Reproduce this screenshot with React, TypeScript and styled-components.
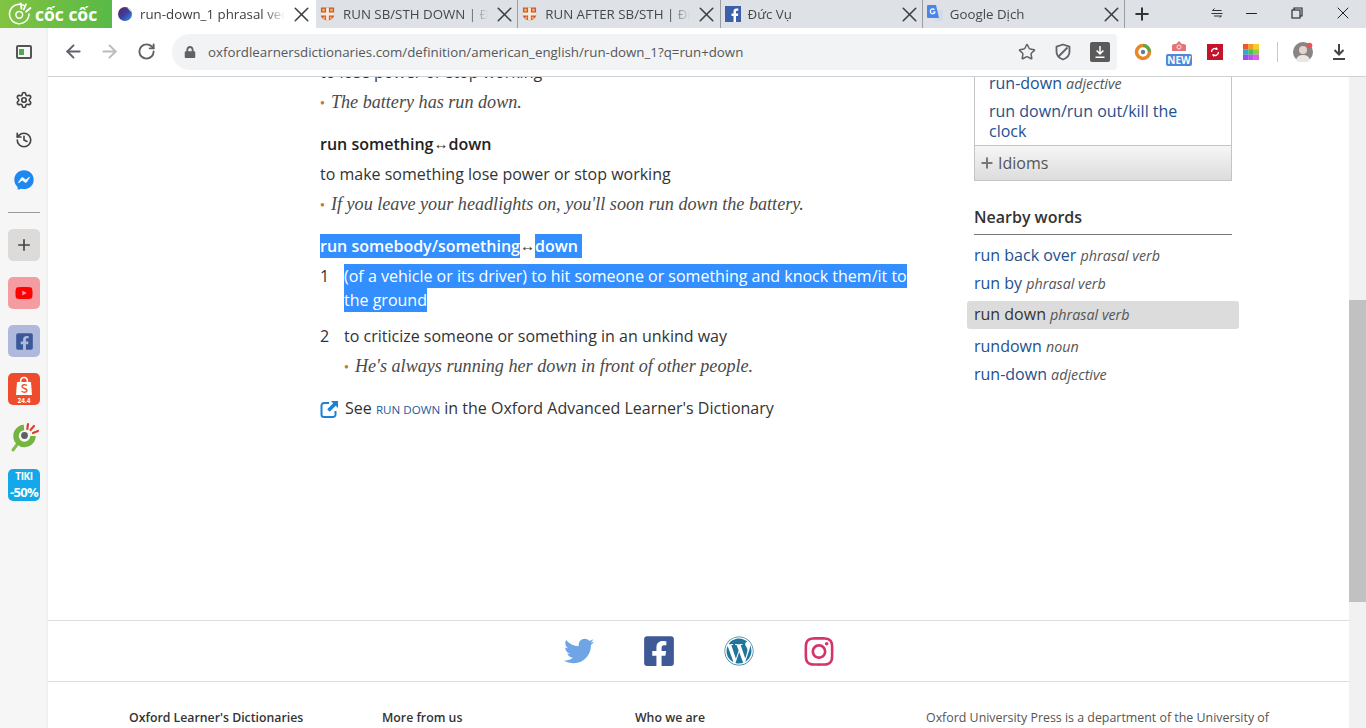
import React, { FC } from 'react';
import styled, { createGlobalStyle } from 'styled-components';
import { ArrowLeft, ArrowRight, RotateCw, Star, X, Plus, Minus, Settings, History } from 'lucide-react';
import { FaTwitter, FaFacebookSquare, FaWordpress, FaInstagram, FaFacebookMessenger, FaLock, FaYoutube } from 'react-icons/fa';

const GlobalStyle = createGlobalStyle`
  html, body { margin: 0; padding: 0; height: 728px; overflow: hidden; background: #fff; }
  * { box-sizing: border-box; }
  body { font-family: "Open Sans", "Liberation Sans", sans-serif; color: #333; }
`;

const tabs = [
  { title: 'run-down_1 phrasal verb', icon: 'orb', active: true },
  { title: 'RUN SB/STH DOWN | Định nghĩa', icon: 'shield' },
  { title: 'RUN AFTER SB/STH | Định nghĩa', icon: 'shield' },
  { title: 'Đức Vụ', icon: 'fb' },
  { title: 'Google Dịch', icon: 'gt' },
];

const Favicon: FC<{ kind: string }> = ({ kind }) => {
  if (kind === 'orb') {
    return (
      <svg width="16" height="16" viewBox="0 0 16 16">
        <defs>
          <linearGradient id="orb" x1="0" y1="0" x2="1" y2="1">
            <stop offset="0" stopColor="#6b1d5e" />
            <stop offset="0.5" stopColor="#3b3f9e" />
            <stop offset="1" stopColor="#2f9be0" />
          </linearGradient>
        </defs>
        <circle cx="8" cy="8" r="7" fill="url(#orb)" />
        <path d="M10 1.400A7 7 0 0 1 14.800 6.500C13 4.500 11.500 3 10 1.400z" fill="#f4f4f4" />
      </svg>
    );
  }
  if (kind === 'shield') {
    return (
      <svg width="15" height="16" viewBox="0 0 16 16">
        <path d="M1 1h14v8c0 3-3 5-7 6-4-1-7-3-7-6z" fill="#d2552d" />
        <path d="M6.500 1h3v14h-3zM1 6.500h14v3H1z" fill="#f5e9da" />
        <path d="M2.500 2.500h2.500v2.500H2.500zM11 2.500h2.500v2.500H11zM3.500 11h2v2h-2zM10.500 11h2v2h-2z" fill="#f0c068" />
      </svg>
    );
  }
  if (kind === 'fb') {
    return (
      <svg width="16" height="16" viewBox="0 0 16 16">
        <rect width="16" height="16" fill="#3b5fa8" />
        <path d="M11 16v-6h2l.3-2.500H11V6c0-.8.300-1.200 1.200-1.200h1.100V2.600c-.5-.1-1.200-.1-1.800-.1-1.900 0-3 1.100-3 3.100v1.900H6.500V10h2v6z" fill="#fff" />
      </svg>
    );
  }
  return (
    <svg width="16" height="18" viewBox="0 0 16 18">
      <path d="M9 5h6a1 1 0 0 1 1 1v9a1 1 0 0 1-1 1H8z" fill="#d5dbe6" />
      <path d="M1 0h8l3 13H1a1 1 0 0 1-1-1V1a1 1 0 0 1 1-1z" fill="#4a86e8" />
      <path d="M7.500 4.800A2.400 2.400 0 1 0 8 7H5.800" fill="none" stroke="#fff" strokeWidth="1.200" />
    </svg>
  );
};

const CocCocMark: FC<{ size: number }> = ({ size }) => (
  <svg width={size} height={size} viewBox="0 0 32 32">
    <path d="M22 5A13 13 0 1 0 28 16" fill="none" stroke="#fff" strokeWidth="2" strokeLinecap="round" />
    <circle cx="15" cy="17" r="4.500" fill="none" stroke="#fff" strokeWidth="2" />
    <path d="M17 2l1 7M24 3l-3 7M30 8l-6 5" stroke="#fff" strokeWidth="2.400" strokeLinecap="round" />
  </svg>
);

const ShieldIcon = () => (
  <svg width="18" height="18" viewBox="0 0 18 18" fill="none" stroke="#5f6368" strokeWidth="1.800">
    <path d="M9 1.500l6.500 2.200v5c0 3.600-2.700 6.300-6.500 7.800-3.800-1.500-6.500-4.200-6.500-7.800v-5z" strokeLinejoin="round" />
    <path d="M13.500 4.500L4.500 13.500" />
  </svg>
);

const SyncBadge = () => (
  <svg width="16" height="16" viewBox="0 0 16 16">
    <rect width="16" height="16" fill="#c4142a" />
    <path d="M4.500 8a3.500 3.500 0 0 1 5.500-2.900M11.500 8A3.500 3.500 0 0 1 6 10.900" fill="none" stroke="#fff" strokeWidth="1.300" />
    <path d="M9.500 3l1.500 2.500-2.800.5zM6.500 13L5 10.500l2.800-.5z" fill="#fff" />
  </svg>
);

const Rainbow = () => (
  <svg width="16" height="16" viewBox="0 0 16 16">
    <rect width="5.400" height="5.400" fill="#f2552c" />
    <rect x="5.300" width="5.400" height="5.400" fill="#f59a23" />
    <rect x="10.600" width="5.400" height="5.400" fill="#fbcb2e" />
    <rect y="5.300" width="5.400" height="5.400" fill="#27b0c9" />
    <rect x="5.300" y="5.300" width="5.400" height="5.400" fill="#3ec35a" />
    <rect x="10.600" y="5.300" width="5.400" height="5.400" fill="#8ad13f" />
    <rect y="10.600" width="5.400" height="5.400" fill="#9a4fe8" />
    <rect x="5.300" y="10.600" width="5.400" height="5.400" fill="#b455ee" />
    <rect x="10.600" y="10.600" width="5.400" height="5.400" fill="#e25cf0" />
  </svg>
);

const ChromeRing = () => (
  <svg width="18" height="18" viewBox="0 0 18 18">
    <circle cx="9" cy="9" r="6.500" fill="none" stroke="#e8872a" strokeWidth="3.500" />
    <path d="M9 2.500A6.500 6.500 0 0 1 15.500 9" fill="none" stroke="#4caf50" strokeWidth="3" />
    <circle cx="9" cy="9" r="2.200" fill="#6b7a86" />
  </svg>
);

const CameraIcon = () => (
  <svg width="16" height="11" viewBox="0 0 16 11">
    <path d="M1 11V5l2-1h2l3-3 3 3h2l2 1v6z" fill="#e5737a" />
    <circle cx="8" cy="7" r="2" fill="none" stroke="#fbe3e4" strokeWidth="1" />
  </svg>
);

const Avatar = () => (
  <svg width="20" height="20" viewBox="0 0 20 20">
    <circle cx="10" cy="10" r="10" fill="#8a8582" />
    <circle cx="10" cy="8" r="4" fill="#e4d6cf" />
    <path d="M3 18c1-4 4-5 7-5s6 1 7 5a10 10 0 0 1-14 0z" fill="#e9e6e4" />
    <circle cx="16.500" cy="3.500" r="2.800" fill="#f0505a" />
  </svg>
);

const DownloadGlyph: FC<{ color: string }> = ({ color }) => (
  <svg width="16" height="18" viewBox="0 0 16 18" fill="none" stroke={color} strokeWidth="2">
    <path d="M8 1v10M3.500 7l4.500 4.500L12.500 7" />
    <path d="M2 16h12" />
  </svg>
);

const SwapIcon = () => (
  <svg width="12" height="12" viewBox="0 0 12 12" fill="none" stroke="#333" strokeWidth="1">
    <path d="M3.500 1.500L1.500 3.500h9M.5 6.500h11M8.500 10.500l2-1.500H3" />
  </svg>
);

const RestoreIcon = () => (
  <svg width="12" height="12" viewBox="0 0 12 12" fill="none" stroke="#222" strokeWidth="1.100">
    <rect x="1" y="3" width="8" height="8" />
    <path d="M3 3V1h8v8H9" />
  </svg>
);

const PanelIcon = () => (
  <svg width="16" height="14" viewBox="0 0 16 14">
    <rect x="1" y="1" width="14" height="12" rx="1" fill="none" stroke="#555" strokeWidth="2" />
    <rect x="3" y="4" width="5" height="6" fill="#4fa94d" />
  </svg>
);

const ShopeeIcon = () => (
  <svg width="32" height="32" viewBox="0 0 32 32">
    <rect width="32" height="32" rx="5" fill="#ee4d2d" />
    <path d="M9 9h14l1 13H8z" fill="#fff" />
    <path d="M12.500 9c0-6 7-6 7 0" fill="none" stroke="#fff" strokeWidth="1.500" />
    <path d="M19 12.500c-2-1.500-5-1-5 1 0 2.500 5 1.500 5 4 0 2-3.500 2.200-5.500.7" fill="none" stroke="#ee4d2d" strokeWidth="1.400" />
    <text x="16" y="29.500" fontSize="6.500" fontWeight="700" fill="#fff" textAnchor="middle" fontFamily="Open Sans, sans-serif">24.4</text>
  </svg>
);

const CocCocApp = () => (
  <svg width="32" height="32" viewBox="0 0 32 32">
    <path d="M5 29l6-8" stroke="#82bd4a" strokeWidth="3" strokeLinecap="round" />
    <path d="M16 6.500A8.500 8.500 0 1 0 25 15" fill="none" stroke="#74b53f" strokeWidth="5.500" />
    <circle cx="16.500" cy="14.500" r="3.400" fill="#5d6166" />
    <path d="M20 3l-.7 5M26 5l-3.500 4M30 10l-5 2" stroke="#d8452f" strokeWidth="2.200" strokeLinecap="round" />
  </svg>
);

const OpenIcon = () => (
  <svg width="19" height="19" viewBox="0 0 19 19">
    <path d="M9 3H4a2.500 2.500 0 0 0-2.500 2.500v9A2.500 2.500 0 0 0 4 17h9a2.500 2.500 0 0 0 2.500-2.500V11" fill="none" stroke="#1b82d6" strokeWidth="2" />
    <path d="M11 1h7v7l-2.300-2.300-6 6-2.500-2.500 6-6z" fill="#1b82d6" />
  </svg>
);

const Arrow = () => <ArrowGlyph>↔</ArrowGlyph>;

export default function App() {
  return (
    <Shell>
      <GlobalStyle />
      <TabStrip>
        <Brand>
          <CocCocMark size={24} />
          <BrandName>cốc cốc</BrandName>
        </Brand>
        {tabs.map(tab => (
          <Tab key={tab.title} active={tab.active}>
            <FaviconSlot><Favicon kind={tab.icon} /></FaviconSlot>
            <TabTitle active={tab.active}>{tab.title}</TabTitle>
            <TabClose><X size={25} strokeWidth={1.500} /></TabClose>
          </Tab>
        ))}
        <NewTab><Plus size={20} strokeWidth={2.400} /></NewTab>
        <WindowControls>
          <SwapButton><SwapIcon /></SwapButton>
          <WindowButton><Minus size={17} strokeWidth={1.600} /></WindowButton>
          <WindowButton><RestoreIcon /></WindowButton>
          <WindowButton><X size={20} strokeWidth={1.200} /></WindowButton>
        </WindowControls>
      </TabStrip>

      <Body>
        <Sidebar>
          <PanelSlot><PanelIcon /></PanelSlot>
          <SideTool><Settings size={18} strokeWidth={2.200} color="#444" /></SideTool>
          <SideTool><History size={18} strokeWidth={2.200} color="#444" /></SideTool>
          <SideTool><FaFacebookMessenger size={20} color="#1e88f0" /></SideTool>
          <SideRule />
          <Tile tint="#dcdbd9"><Plus size={18} strokeWidth={2.200} color="#444" /></Tile>
          <Tile tint="#f59ca2"><FaYoutube size={18} color="#f00" /></Tile>
          <Tile tint="#afb9db"><FaFacebookSquare size={19} color="#3b5998" /></Tile>
          <Tile><ShopeeIcon /></Tile>
          <Tile><CocCocApp /></Tile>
          <Tile tint="#12a8ea">
            <TikiLabel>
              <TikiName>TIKI</TikiName>
              <TikiDeal>-50%</TikiDeal>
            </TikiLabel>
          </Tile>
        </Sidebar>

        <Main>
          <Toolbar>
            <NavButton><ArrowLeft size={21} color="#5f6368" strokeWidth={2.200} /></NavButton>
            <NavButton><ArrowRight size={21} color="#b9bcc0" strokeWidth={2.200} /></NavButton>
            <NavButton><RotateCw size={19} color="#5f6368" strokeWidth={2.400} /></NavButton>
            <AddressBar>
              <FaLock size={12} color="#5f6368" />
              <Url>oxfordlearnersdictionaries.com/definition/american_english/run-down_1?q=run+down</Url>
              <AddressActions>
                <Star size={18} color="#5f6368" strokeWidth={2} />
                <ShieldIcon />
                <DownloadBadge><DownloadGlyph color="#fff" /></DownloadBadge>
              </AddressActions>
            </AddressBar>
            <Extensions>
              <ExtSlot><ChromeRing /></ExtSlot>
              <ExtSlot>
                <CameraSlot><CameraIcon /></CameraSlot>
                <NewBadge>NEW</NewBadge>
              </ExtSlot>
              <ExtSlot><SyncBadge /></ExtSlot>
              <ExtSlot><Rainbow /></ExtSlot>
              <ExtRule />
              <ExtSlot><Avatar /></ExtSlot>
              <ExtSlot><DownloadGlyph color="#444" /></ExtSlot>
            </Extensions>
          </Toolbar>

          <Viewport>
            <Page>
              <Columns>
                <Entry>
                  <Def>to lose power or stop working</Def>
                  <Example>The battery has run down.</Example>
                  <Head>run something<Arrow />down</Head>
                  <Def>to make something lose power or stop working</Def>
                  <Example>If you leave your headlights on, you'll soon run down the battery.</Example>
                  <Head><Picked>run somebody/something</Picked><Arrow /><Picked>down&nbsp;</Picked></Head>
                  <Sense>
                    <SenseNo>1</SenseNo>
                    <Def><Picked>(of a vehicle or its driver) to hit someone or something and knock them/it to the ground</Picked></Def>
                  </Sense>
                  <Sense spaced>
                    <SenseNo>2</SenseNo>
                    <div>
                      <Def>to criticize someone or something in an unkind way</Def>
                      <Example>He's always running her down in front of other people.</Example>
                    </div>
                  </Sense>
                  <SeeAlso>
                    <OpenIcon />
                    <span>See <SmallCaps>run down</SmallCaps> in the Oxford Advanced Learner's Dictionary</span>
                  </SeeAlso>
                </Entry>

                <Aside>
                  <ResultBox>
                    <BoxLinks>
                      <BoxLink>run-down <Pos>adjective</Pos></BoxLink>
                      <BoxLink>run down/run out/kill the clock</BoxLink>
                    </BoxLinks>
                    <BoxHeader><Plus size={16} strokeWidth={3} color="#777" /> Idioms</BoxHeader>
                  </ResultBox>
                  <NearbyTitle>Nearby words</NearbyTitle>
                  <NearbyItem>run back over <Pos>phrasal verb</Pos></NearbyItem>
                  <NearbyItem>run by <Pos>phrasal verb</Pos></NearbyItem>
                  <NearbyItem current>run down <Pos>phrasal verb</Pos></NearbyItem>
                  <NearbyItem>rundown <Pos>noun</Pos></NearbyItem>
                  <NearbyItem>run-down <Pos>adjective</Pos></NearbyItem>
                </Aside>
              </Columns>

              <Socials>
                <SocialSlot><FaTwitter size={30} color="#6fa5e5" /></SocialSlot>
                <SocialSlot><FaFacebookSquare size={34} color="#3f5896" /></SocialSlot>
                <SocialSlot><FaWordpress size={30} color="#21759b" /></SocialSlot>
                <SocialSlot><FaInstagram size={33} color="#d6336c" /></SocialSlot>
              </Socials>

              <FooterGrid>
                <FooterHead>Oxford Learner's Dictionaries</FooterHead>
                <FooterHead>More from us</FooterHead>
                <FooterHead>Who we are</FooterHead>
                <FooterText>Oxford University Press is a department of the University of</FooterText>
              </FooterGrid>
            </Page>
            <Scrollbar><ScrollThumb /></Scrollbar>
          </Viewport>
        </Main>
      </Body>
    </Shell>
  );
}

//---------------------------STYLES-------------------------------------------//

const Shell = styled.div`
  width: 1366px;
  height: 728px;
  display: flex;
  flex-direction: column;
  overflow: hidden;
`;

const TabStrip = styled.div`
  height: 28px;
  display: flex;
  background: #dee1e6;
  flex: none;
`;

const Brand = styled.div`
  width: 112px;
  display: flex;
  align-items: center;
  gap: 3px;
  padding-left: 8px;
  background: linear-gradient(90deg, #82c341, #58b947);
  flex: none;
`;

const BrandName = styled.span`
  color: #fff;
  font-weight: 700;
  font-size: 17.500px;
  line-height: 1;
  margin-top: 2px;
  white-space: nowrap;
`;

const Tab = styled.div<{ active?: boolean }>`
  width: ${p => (p.active ? '204px' : '202.250px')};
  flex: none;
  display: flex;
  align-items: center;
  padding-left: ${p => (p.active ? '5px' : '4px')};
  background: ${p => (p.active ? '#fff' : 'transparent')};
  border-right: 1px solid ${p => (p.active ? 'transparent' : '#9a9da1')};
`;

const FaviconSlot = styled.div`
  width: 16px;
  height: 18px;
  display: flex;
  align-items: center;
  flex: none;
`;

const TabTitle = styled.div<{ active?: boolean }>`
  width: 145px;
  margin-left: 7px;
  font-size: 13.300px;
  color: ${p => (p.active ? '#3c4043' : '#45484c')};
  white-space: nowrap;
  overflow: hidden;
  -webkit-mask-image: linear-gradient(90deg, #000 86%, transparent);
  mask-image: linear-gradient(90deg, #000 86%, transparent);
`;

const TabClose = styled.div`
  display: flex;
  margin-left: 4px;
  color: #3c4043;
`;

const NewTab = styled.div`
  width: 33px;
  display: flex;
  align-items: center;
  justify-content: center;
  color: #333;
`;

const WindowControls = styled.div`
  display: flex;
  margin-left: auto;
`;

const WindowButton = styled.div`
  width: 46px;
  display: flex;
  align-items: center;
  justify-content: center;
  color: #222;
  padding-bottom: 2px;
`;

const SwapButton = styled(WindowButton)`
  width: 34px;
  padding-left: 12px;
`;

const Body = styled.div`
  flex: 1;
  display: flex;
  min-height: 0;
`;

const Sidebar = styled.div`
  width: 48px;
  flex: none;
  display: flex;
  flex-direction: column;
  align-items: center;
  background: #f6f6f6;
  box-shadow: inset -2px 0 2px -1px #ececec;
`;

const PanelSlot = styled.div`
  height: 48px;
  display: flex;
  align-items: center;
  margin-bottom: 4px;
`;

const SideTool = styled.div`
  height: 40px;
  display: flex;
  align-items: center;
`;

const SideRule = styled.div`
  width: 32px;
  height: 1px;
  background: #999;
  margin: 12px 0 16px;
`;

const Tile = styled.div<{ tint?: string }>`
  width: 32px;
  height: 32px;
  flex: none;
  border-radius: 5px;
  margin-bottom: 16px;
  display: flex;
  align-items: center;
  justify-content: center;
  background: ${p => p.tint || 'transparent'};
`;

const TikiLabel = styled.div`
  color: #fff;
  font-weight: 700;
  text-align: center;
`;

const TikiName = styled.div`
  font-size: 10px;
  line-height: 14px;
  letter-spacing: -0.4px;
`;

const TikiDeal = styled.div`
  font-size: 13px;
  line-height: 18px;
  letter-spacing: -0.7px;
`;

const Main = styled.div`
  flex: 1;
  min-width: 0;
  display: flex;
  flex-direction: column;
`;

const Toolbar = styled.div`
  height: 49px;
  flex: none;
  display: flex;
  align-items: center;
  padding: 0 8px 1px 7px;
  background: #fff;
  border-bottom: 1px solid #cfd1d3;
`;

const NavButton = styled.div`
  width: 36.500px;
  height: 36px;
  flex: none;
  display: flex;
  align-items: center;
  justify-content: center;
`;

const AddressBar = styled.div`
  width: 945px;
  height: 36px;
  flex: none;
  margin-left: 7.500px;
  padding: 0 7px 0 12px;
  display: flex;
  align-items: center;
  background: #f1f3f4;
  border-radius: 18px 4px 4px 18px;
`;

const Url = styled.div`
  margin-left: 12px;
  font-size: 13.300px;
  color: #55585c;
  white-space: nowrap;
`;

const AddressActions = styled.div`
  margin-left: auto;
  display: flex;
  align-items: center;
  gap: 18px;
`;

const DownloadBadge = styled.div`
  width: 20px;
  height: 20px;
  border-radius: 2px;
  background: #5a5a5a;
  display: flex;
  align-items: center;
  justify-content: center;
  svg { width: 12px; height: 14px; }
`;

const Extensions = styled.div`
  display: flex;
  align-items: center;
  margin-left: 8px;
`;

const ExtSlot = styled.div`
  width: 36px;
  height: 36px;
  position: relative;
  display: flex;
  align-items: center;
  justify-content: center;
`;

const ExtRule = styled.div`
  width: 1px;
  height: 20px;
  background: #c8cacc;
  margin: 0 7px 0 8px;
`;

const CameraSlot = styled.div`
  display: flex;
  margin-bottom: 13px;
`;

const NewBadge = styled.div`
  position: absolute;
  left: 5px;
  bottom: 4px;
  width: 26px;
  height: 12px;
  border-radius: 2px;
  background: #4f86d9;
  color: #fff;
  font-size: 10px;
  font-weight: 700;
  line-height: 12px;
  text-align: center;
`;

const Viewport = styled.div`
  flex: 1;
  min-height: 0;
  display: flex;
`;

const Page = styled.div`
  flex: 1;
  min-width: 0;
  overflow: hidden;
  display: flex;
  flex-direction: column;
`;

const Columns = styled.div`
  height: 543px;
  flex: none;
  overflow: hidden;
  display: flex;
  padding-left: 272px;
`;

const Entry = styled.div`
  width: 600px;
  flex: none;
  margin-top: -17px;
  margin-right: 54px;
  font-size: 16px;
  line-height: 24px;
`;

const Def = styled.div`
  color: #333;
`;

const Example = styled.div`
  margin-top: 6px;
  font-family: "Liberation Serif", serif;
  font-style: italic;
  font-size: 18.150px;
  color: #4a4a4a;
  &::before {
    content: '•';
    font-style: normal;
    color: #c27a2c;
    margin-right: 6px;
    font-size: 14px;
  }
`;

const Head = styled.div`
  margin-top: 16px;
  margin-bottom: 6px;
  font-weight: 600;
  color: #222;
`;

const ArrowGlyph = styled.span`
  font-family: "Liberation Sans", sans-serif;
  font-weight: 400;
  font-size: 15px;
  line-height: 0;
  color: #333;
  display: inline-block;
  width: 15px;
  text-align: center;
  vertical-align: 1px;
`;

const Picked = styled.span`
  background: #338fff;
  color: #fff;
  padding: 1px 0;
  -webkit-box-decoration-break: clone;
  box-decoration-break: clone;
`;

const Sense = styled.div<{ spaced?: boolean }>`
  display: grid;
  grid-template-columns: 24px 1fr;
  margin-top: ${p => (p.spaced ? '12px' : '0')};
`;

const SenseNo = styled.div`
  color: #333;
`;

const SeeAlso = styled.div`
  margin-top: 16px;
  display: flex;
  align-items: center;
  gap: 6px;
  color: #333;
`;

const SmallCaps = styled.span`
  text-transform: uppercase;
  color: #1c5aa0;
  font-size: 11.600px;
  font-weight: 500;
`;

const Aside = styled.div`
  width: 258px;
  flex: none;
  margin-top: -4px;
  font-size: 16px;
`;

const ResultBox = styled.div`
  border: 1px solid #c4c4c4;
  border-top: none;
`;

const BoxLinks = styled.div`
  padding: 0 50px 0 14px;
`;

const BoxLink = styled.div`
  color: #23508f;
  line-height: 20px;
  margin-bottom: 7px;
  &:last-child { margin-bottom: 4px; }
`;

const BoxHeader = styled.div`
  height: 35px;
  display: flex;
  align-items: center;
  gap: 3px;
  padding-left: 4px;
  color: #555;
  border-top: 1px solid #c4c4c4;
  background: linear-gradient(#f6f6f6, #dcdcdc);
`;

const Pos = styled.span`
  font-style: italic;
  font-size: 14.300px;
  color: #555;
`;

const NearbyTitle = styled.div`
  margin-top: 24px;
  padding-bottom: 5px;
  border-bottom: 1px solid #777;
  font-weight: 600;
  color: #333;
  line-height: 24px;
  margin-bottom: 6px;
`;

const NearbyItem = styled.div<{ current?: boolean }>`
  height: 28px;
  line-height: ${p => (p.current ? '27px' : '28px')};
  color: ${p => (p.current ? '#333' : '#23508f')};
  background: ${p => (p.current ? '#dcdcdc' : 'transparent')};
  border-radius: 3px;
  margin: ${p => (p.current ? '4px -7px 3px' : '0 -7px')};
  padding: 0 7px;
`;

const Socials = styled.div`
  height: 62px;
  flex: none;
  display: flex;
  align-items: center;
  justify-content: center;
  gap: 50px;
  border-top: 1px solid #ddd;
  border-bottom: 1px solid #ddd;
`;

const SocialSlot = styled.div`
  width: 30px;
  display: flex;
  justify-content: center;
`;

const FooterGrid = styled.div`
  display: grid;
  grid-template-columns: 253px 253px 291px 1fr;
  padding: 27px 0 0 81px;
  align-items: baseline;
`;

const FooterHead = styled.div`
  font-size: 12.300px;
  font-weight: 600;
  color: #333;
  white-space: nowrap;
`;

const FooterText = styled.div`
  font-size: 12.400px;
  color: #555;
  white-space: nowrap;
`;

const Scrollbar = styled.div`
  width: 17px;
  flex: none;
  background: #f1f1f1;
  padding-top: 223px;
`;

const ScrollThumb = styled.div`
  height: 302px;
  background: #c1c1c1;
`;
